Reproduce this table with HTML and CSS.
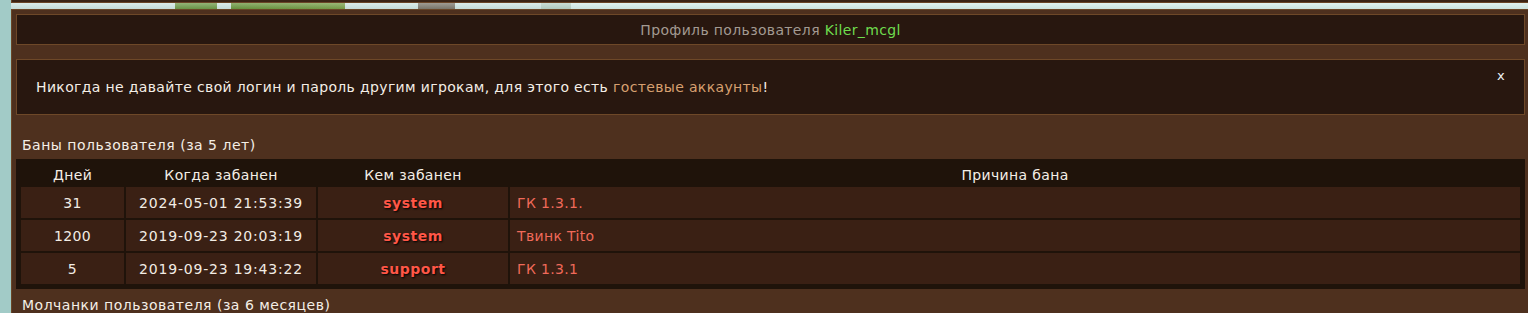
FILE: index.html
```html
<!DOCTYPE html>
<html lang="ru">
<head>
<meta charset="utf-8">
<link rel="stylesheet" href="styles.css">
</head>
<body>
<div class="topbar"></div>
<div class="landscape"></div>
<div class="panel">
  <div class="profile-head">Профиль пользователя <span class="nick">Kiler_mcgl</span></div>
  <div class="notice">
    <span>Никогда не давайте свой логин и пароль другим игрокам, для этого есть <a class="link">гостевые аккаунты</a>!</span>
    <span class="close">x</span>
  </div>
  <div class="section-title">Баны пользователя (за 5 лет)</div>
  <table class="bans">
    <thead>
      <tr><th class="c-days">Дней</th><th class="c-when">Когда забанен</th><th class="c-who">Кем забанен</th><th>Причина бана</th></tr>
    </thead>
    <tbody>
      <tr><td class="center">31</td><td class="center date">2024-05-01 21:53:39</td><td class="who">system</td><td class="reason">ГК 1.3.1.</td></tr>
      <tr><td class="center">1200</td><td class="center date">2019-09-23 20:03:19</td><td class="who">system</td><td class="reason">Твинк Tito</td></tr>
      <tr><td class="center">5</td><td class="center date">2019-09-23 19:43:22</td><td class="who">support</td><td class="reason">ГК 1.3.1</td></tr>
    </tbody>
  </table>
  <div class="section-title second">Молчанки пользователя (за 6 месяцев)</div>
</div>
</body>
</html>
```
FILE: styles.css
```css
html, body {
  margin: 0;
  padding: 0;
}
body {
  background: #a2cbc7;
  font-family: "DejaVu Sans", Verdana, sans-serif;
  font-size: 14px;
  letter-spacing: 0.35px;
  color: #f2ece4;
  overflow: hidden;
}
.topbar {
  margin-left: 11px;
  height: 2px;
  background: #3b2415;
  border-bottom: 1px solid #6b4526;
  border-left: 1px solid #6b4526;
}
.landscape {
  margin-left: 11px;
  height: 6px;
  background:
    linear-gradient(180deg, rgba(255,255,255,0.25), rgba(0,0,0,0.05)),
    linear-gradient(90deg,
      #cfe6e2 0px, #cfe6e2 164px,
      #6f9a4a 164px, #6f9a4a 206px,
      #cfe6e2 206px, #cfe6e2 220px,
      #6a9640 220px, #7aa04a 334px,
      #cfe6e2 334px, #cfe6e2 407px,
      #7f7a6e 407px, #7f7a6e 444px,
      #cfe6e2 444px, #cfe6e2 530px,
      #b8d2c6 530px, #b8d2c6 560px,
      #d6eeea 560px);
}
.panel {
  margin-left: 11px;
  border: 1px solid #6a4526;
  border-right: none;
  background: #4e301e;
  padding: 4px 3px 6px 4px;
}
.profile-head {
  height: 29px;
  line-height: 30px;
  border: 1px solid #6e4828;
  background: #28170f;
  text-align: center;
  color: #a39a92;
}
.nick {
  color: #6fdc4e;
}
.notice {
  position: relative;
  margin-top: 14px;
  height: 54px;
  border: 1px solid #6e4828;
  background: #28170f;
  display: flex;
  align-items: center;
  padding-left: 19px;
  color: #f4eee6;
}
.link {
  color: #d7a070;
}
.close {
  position: absolute;
  right: 19px;
  top: 8px;
  font-size: 13px;
  color: #eef4f8;
}
.section-title {
  margin-top: 22px;
  padding-left: 6px;
  font-size: 14px;
  letter-spacing: 0.5px;
  line-height: 17px;
  color: #f4eee6;
}
.section-title.second {
  margin-top: 8px;
}
.bans {
  width: 100%;
  margin-top: 5px;
  border: 3px solid #1f130a;
  border-spacing: 2px;
  background: #1f130a;
  box-sizing: border-box;
}
.bans th {
  font-weight: normal;
  height: 21px;
  padding: 0;
  color: #f4eee6;
  text-align: center;
}
.c-days { width: 103px; }
.c-when { width: 190px; }
.c-who { width: 190px; }
.bans td {
  background: #3a2014;
  height: 31px;
  padding: 0;
}
.center {
  text-align: center;
}
.date {
  letter-spacing: 0.8px;
}
.who {
  text-align: center;
  font-weight: bold;
  letter-spacing: 0.5px;
  font-size: 14px;
  color: #ff5747;
  text-shadow: 1px 1px 2px #000;
}
.bans td.reason {
  padding-left: 7px;
  color: #f06a5a;
}
```
